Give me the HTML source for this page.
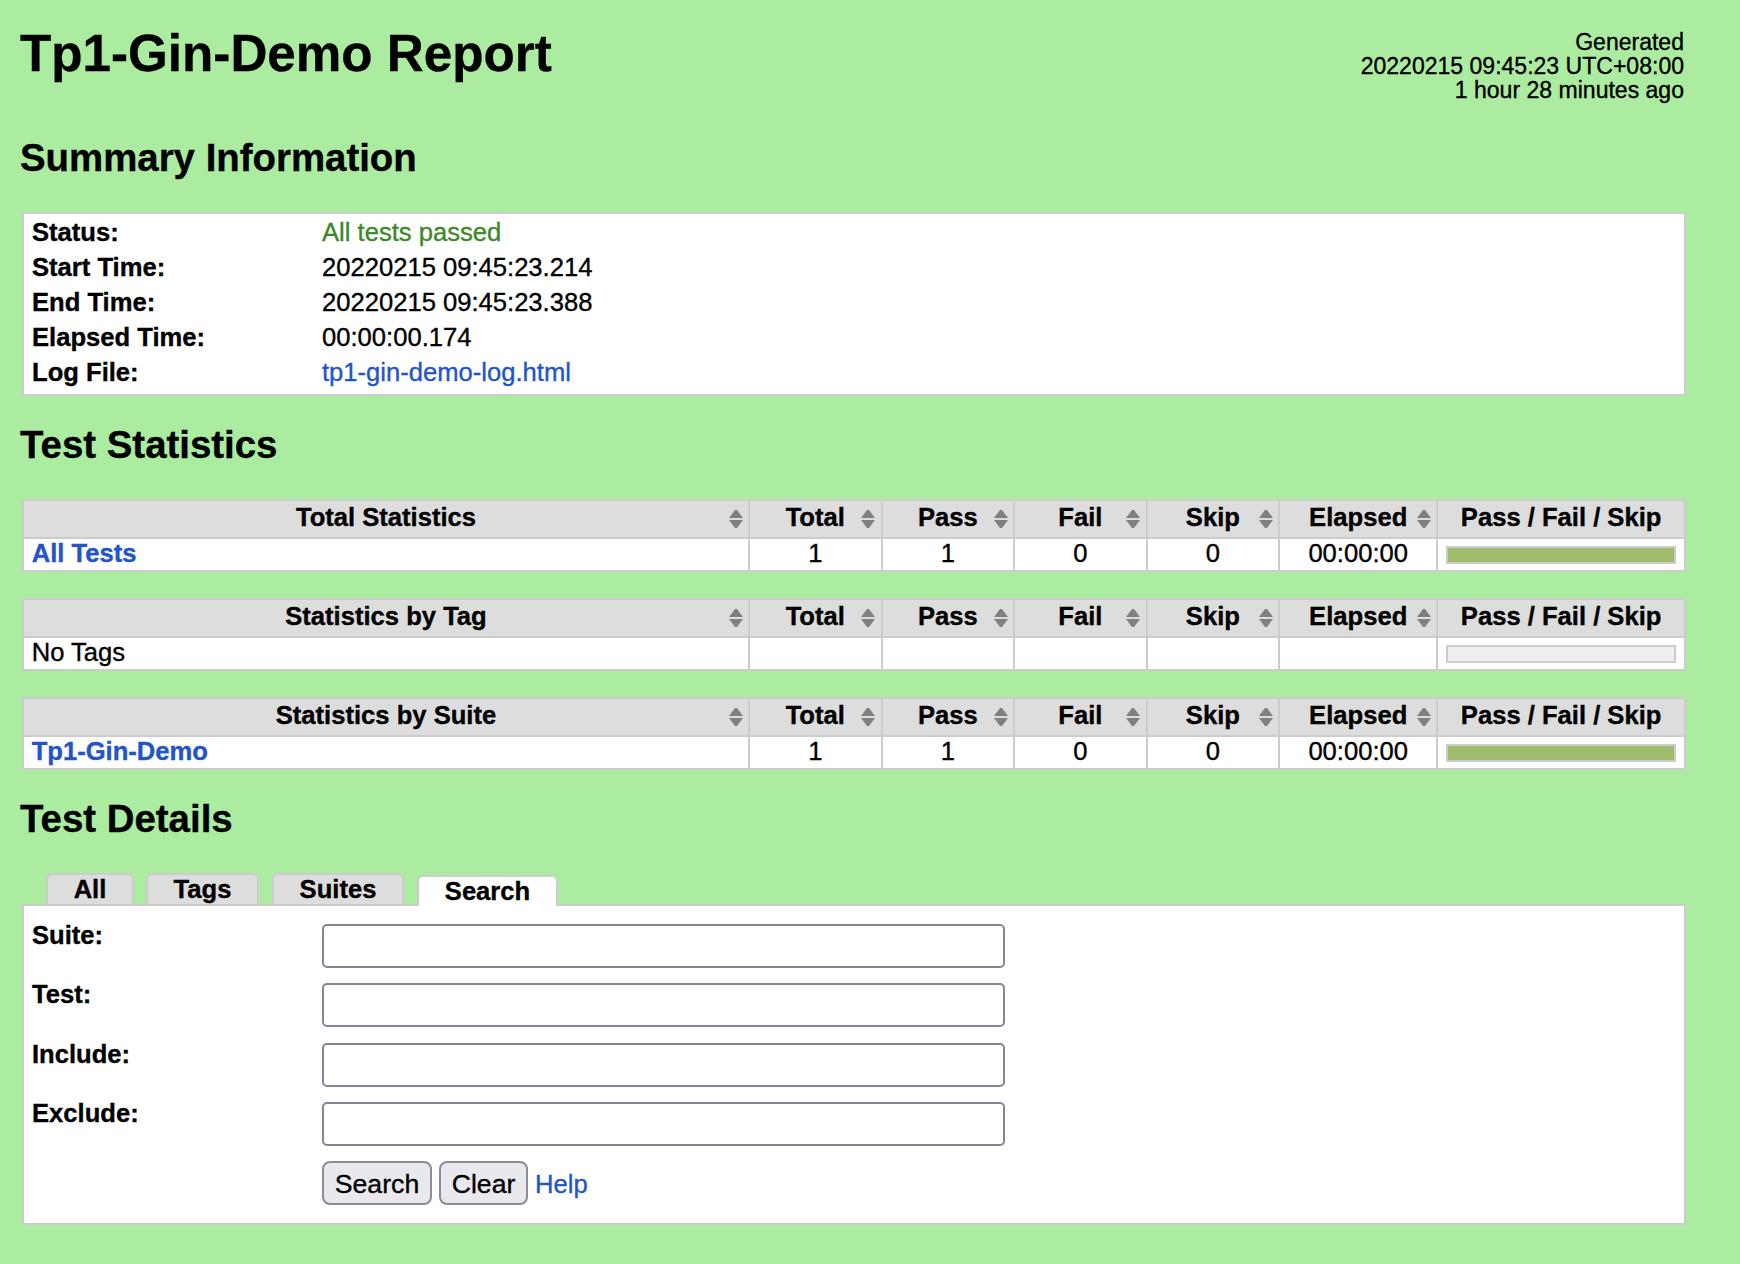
<!DOCTYPE html>
<html><head><meta charset="utf-8"><title>Tp1-Gin-Demo Report</title>
<style>
html,body{margin:0;padding:0;}
body{background:#aceca1;font-family:"Liberation Sans",sans-serif;font-size:25.6px;color:#000;width:1740px;height:1264px;overflow:hidden;position:relative;-webkit-text-stroke:0.35px currentColor;}
a{color:#2355c5;text-decoration:none;}
#wrap{position:absolute;left:22px;top:0;width:1664px;}
#header{height:76.8px;margin:0;padding-top:26px;position:relative;}
h1{font-size:51.2px;margin:0;font-weight:bold;position:absolute;left:-2px;top:24px;line-height:59px;white-space:nowrap;}
#generated{position:absolute;right:2px;top:30px;text-align:right;font-size:23.04px;line-height:24px;white-space:nowrap;}
h2{font-size:38.4px;margin:0;font-weight:bold;position:absolute;left:-2px;white-space:nowrap;line-height:44px;}
table{border-collapse:collapse;font-size:25.6px;table-layout:fixed;}
#summary{position:absolute;left:0;top:212px;width:1664px;height:184px;box-sizing:border-box;border:2px solid #ccc;background:#fff;}
#summary .row{position:absolute;left:8px;margin-top:1px;height:35px;line-height:35px;white-space:nowrap;}
#summary .row b{position:absolute;left:0;}
#summary .row span{position:absolute;left:290px;}
.pass{color:#3d8828;}
.statistics{position:absolute;left:0;width:1664px;border-collapse:collapse;line-height:26px;}
.statistics th,.statistics td{border:2px solid #ccc;padding:0.56px 7.68px 4.56px;}
.statistics th{background:#ddd;padding:3.12px 7.68px 7.12px;font-weight:bold;text-align:center;position:relative;}
.statistics td{background:#fff;vertical-align:middle;text-align:center;}
.statistics td.name{text-align:left;}
.statistics td.name a{font-weight:bold;}
.statistics th.s{width:115.2px;}
.statistics th.e{width:140.8px;}
.statistics th.g{width:230.4px;}
.graph,.empty-graph{border:2px solid #ccc;height:14px;background:#9fbc6c;position:relative;top:2px;}
.empty-graph{background:#eee;}
.arr{position:absolute;right:5.5px;top:9px;width:14px;height:18px;}

.tab{position:absolute;top:873px;height:32px;box-sizing:border-box;border:2px solid #ccc;border-bottom:0;border-radius:6px 6px 0 0;background:#ddd;font-weight:bold;text-align:center;line-height:28px;}
.tab.sel{top:875px;height:31px;background:#fff;line-height:28px;z-index:2;}
#panel{position:absolute;left:0;top:904px;width:1664px;height:321px;box-sizing:border-box;border:2px solid #ccc;background:#fff;}
.lbl{position:absolute;left:8px;line-height:30px;}
.inp{position:absolute;left:298px;width:683px;height:44px;box-sizing:border-box;border:2px solid #858596;border-radius:5px;background:#fff;}
.btn{position:absolute;top:255px;height:44px;box-sizing:border-box;border:2px solid #8b8b99;border-radius:8px;background:#e9e9ed;font-size:26.67px;text-align:center;line-height:42px;}
.help{position:absolute;left:511px;top:263px;line-height:30px;}
</style></head><body>
<div id="wrap">
<h1>Tp1-Gin-Demo Report</h1>
<div id="generated">Generated<br>20220215 09:45:23 UTC+08:00<br>1 hour 28 minutes ago</div>
<h2 style="top:136px">Summary Information</h2>
<div id="summary">
<div class="row" style="top:0px"><b>Status:</b><span class="pass">All tests passed</span></div>
<div class="row" style="top:35px"><b>Start Time:</b><span>20220215 09:45:23.214</span></div>
<div class="row" style="top:70px"><b>End Time:</b><span>20220215 09:45:23.388</span></div>
<div class="row" style="top:105px"><b>Elapsed Time:</b><span>00:00:00.174</span></div>
<div class="row" style="top:140px"><b>Log File:</b><span><a>tp1-gin-demo-log.html</a></span></div>
</div>
<h2 style="top:423px">Test Statistics</h2>
<table class="statistics" style="top:499px"><tr><th class="n">Total Statistics<svg class="arr" viewBox="0 0 14 18"><path d="M6 0 H8 L14 8 H0 Z M0 10 H14 L8 18 H6 Z" fill="#808080"/></svg></th><th class="s">Total<svg class="arr" viewBox="0 0 14 18"><path d="M6 0 H8 L14 8 H0 Z M0 10 H14 L8 18 H6 Z" fill="#808080"/></svg></th><th class="s">Pass<svg class="arr" viewBox="0 0 14 18"><path d="M6 0 H8 L14 8 H0 Z M0 10 H14 L8 18 H6 Z" fill="#808080"/></svg></th><th class="s">Fail<svg class="arr" viewBox="0 0 14 18"><path d="M6 0 H8 L14 8 H0 Z M0 10 H14 L8 18 H6 Z" fill="#808080"/></svg></th><th class="s">Skip<svg class="arr" viewBox="0 0 14 18"><path d="M6 0 H8 L14 8 H0 Z M0 10 H14 L8 18 H6 Z" fill="#808080"/></svg></th><th class="e">Elapsed<svg class="arr" viewBox="0 0 14 18"><path d="M6 0 H8 L14 8 H0 Z M0 10 H14 L8 18 H6 Z" fill="#808080"/></svg></th><th class="g">Pass / Fail / Skip</th></tr><tr><td class="name"><a>All Tests</a></td><td>1</td><td>1</td><td>0</td><td>0</td><td>00:00:00</td><td><div class="graph"></div></td></tr></table>
<table class="statistics" style="top:598px"><tr><th class="n">Statistics by Tag<svg class="arr" viewBox="0 0 14 18"><path d="M6 0 H8 L14 8 H0 Z M0 10 H14 L8 18 H6 Z" fill="#808080"/></svg></th><th class="s">Total<svg class="arr" viewBox="0 0 14 18"><path d="M6 0 H8 L14 8 H0 Z M0 10 H14 L8 18 H6 Z" fill="#808080"/></svg></th><th class="s">Pass<svg class="arr" viewBox="0 0 14 18"><path d="M6 0 H8 L14 8 H0 Z M0 10 H14 L8 18 H6 Z" fill="#808080"/></svg></th><th class="s">Fail<svg class="arr" viewBox="0 0 14 18"><path d="M6 0 H8 L14 8 H0 Z M0 10 H14 L8 18 H6 Z" fill="#808080"/></svg></th><th class="s">Skip<svg class="arr" viewBox="0 0 14 18"><path d="M6 0 H8 L14 8 H0 Z M0 10 H14 L8 18 H6 Z" fill="#808080"/></svg></th><th class="e">Elapsed<svg class="arr" viewBox="0 0 14 18"><path d="M6 0 H8 L14 8 H0 Z M0 10 H14 L8 18 H6 Z" fill="#808080"/></svg></th><th class="g">Pass / Fail / Skip</th></tr><tr><td class="name">No Tags</td><td></td><td></td><td></td><td></td><td></td><td><div class="empty-graph"></div></td></tr></table>
<table class="statistics" style="top:697px"><tr><th class="n">Statistics by Suite<svg class="arr" viewBox="0 0 14 18"><path d="M6 0 H8 L14 8 H0 Z M0 10 H14 L8 18 H6 Z" fill="#808080"/></svg></th><th class="s">Total<svg class="arr" viewBox="0 0 14 18"><path d="M6 0 H8 L14 8 H0 Z M0 10 H14 L8 18 H6 Z" fill="#808080"/></svg></th><th class="s">Pass<svg class="arr" viewBox="0 0 14 18"><path d="M6 0 H8 L14 8 H0 Z M0 10 H14 L8 18 H6 Z" fill="#808080"/></svg></th><th class="s">Fail<svg class="arr" viewBox="0 0 14 18"><path d="M6 0 H8 L14 8 H0 Z M0 10 H14 L8 18 H6 Z" fill="#808080"/></svg></th><th class="s">Skip<svg class="arr" viewBox="0 0 14 18"><path d="M6 0 H8 L14 8 H0 Z M0 10 H14 L8 18 H6 Z" fill="#808080"/></svg></th><th class="e">Elapsed<svg class="arr" viewBox="0 0 14 18"><path d="M6 0 H8 L14 8 H0 Z M0 10 H14 L8 18 H6 Z" fill="#808080"/></svg></th><th class="g">Pass / Fail / Skip</th></tr><tr><td class="name"><a>Tp1-Gin-Demo</a></td><td>1</td><td>1</td><td>0</td><td>0</td><td>00:00:00</td><td><div class="graph"></div></td></tr></table>
<h2 style="top:797px">Test Details</h2>
<div class="tab" style="left:24px;width:88px">All</div>
<div class="tab" style="left:124px;width:113px">Tags</div>
<div class="tab" style="left:250px;width:132px">Suites</div>
<div class="tab sel" style="left:395px;width:141px">Search</div>
<div id="panel">
<b class="lbl" style="top:14px">Suite:</b><div class="inp" style="top:18px"></div>
<b class="lbl" style="top:73px">Test:</b><div class="inp" style="top:77px"></div>
<b class="lbl" style="top:133px">Include:</b><div class="inp" style="top:137px"></div>
<b class="lbl" style="top:192px">Exclude:</b><div class="inp" style="top:196px"></div>
<div class="btn" style="left:298px;width:110px">Search</div>
<div class="btn" style="left:415px;width:89px">Clear</div>
<a class="help">Help</a>
</div>
</div>
</body></html>
